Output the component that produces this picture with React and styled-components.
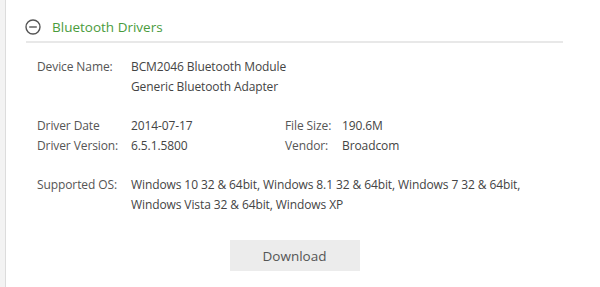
import React from 'react';
import styled, { createGlobalStyle } from 'styled-components';

const GlobalStyle = createGlobalStyle`
	html, body {
		margin: 0;
		padding: 0;
		background: #fff;
	}
	body {
		font-family: 'Open Sans', 'Noto Sans', sans-serif;
		color: #444;
	}
`;

const Page = styled.div`
	display: flex;
	height: 287px;
	width: 600px;
	overflow: hidden;
`;

const Rail = styled.div`
	width: 5px;
	flex: none;
	background: #f3f3f3;
	border-right: 1px solid #dcdcdc;
`;

const Main = styled.div`
	width: 537px;
	padding-left: 20px;
`;

const Header = styled.div`
	display: flex;
	align-items: center;
	gap: 11px;
	height: 43px;
	padding: 14px 0 2px 0;
	border-bottom: 2px solid #e8e8e8;
	box-sizing: border-box;
`;

const Title = styled.span`
	font-size: 13.5px;
	color: #4a9b3c;
	line-height: 20px;
`;

const Body = styled.div`
	padding: 14px 0 0 11px;
`;

const Grid = styled.div`
	display: grid;
	grid-template-columns: ${(p) => p.$cols};
	grid-auto-rows: 20px;
	margin-bottom: ${(p) => p.$gap ?? 19}px;
	font-size: 12px;
	letter-spacing: -0.1px;
	line-height: 20px;
`;

const Label = styled.div`
	color: #555;
	white-space: nowrap;
`;

const Value = styled.div`
	color: #444;
	white-space: nowrap;
`;

const Wrap = styled.div`
	color: #444;
	grid-row: span 2;
	white-space: nowrap;
`;

const ButtonRow = styled.div`
	display: flex;
	justify-content: center;
	padding-top: 25px;
`;

const Button = styled.button`
	width: 130px;
	height: 31px;
	border: none;
	background: #ececec;
	color: #555;
	font-family: 'Open Sans', 'Noto Sans', sans-serif;
	font-size: 13.5px;
	cursor: pointer;
`;

function CollapseIcon() {
	return (
		<svg width="16" height="16" viewBox="0 0 16 16" style={{ marginLeft: -1 }}>
			<circle cx="8" cy="8" r="7" fill="none" stroke="#555" strokeWidth="1.4" />
			<line x1="4.2" y1="8" x2="11.8" y2="8" stroke="#555" strokeWidth="1.4" />
		</svg>
	);
}

export default function App() {
	return (
		<Page>
			<GlobalStyle />
			<Rail />
			<Main>
				<Header>
					<CollapseIcon />
					<Title>Bluetooth Drivers</Title>
				</Header>
				<Body>
					<Grid $cols="94px auto">
						<Label>Device Name:</Label>
						<Value>BCM2046 Bluetooth Module</Value>
						<div />
						<Value>Generic Bluetooth Adapter</Value>
					</Grid>
					<Grid $cols="94px 154px 57px auto">
						<Label>Driver Date</Label>
						<Value>2014-07-17</Value>
						<Label>File Size:</Label>
						<Value>190.6M</Value>
						<Label>Driver Version:</Label>
						<Value>6.5.1.5800</Value>
						<Label>Vendor:</Label>
						<Value>Broadcom</Value>
					</Grid>
					<Grid $cols="94px auto" $gap={0}>
						<Label>Supported OS:</Label>
						<Wrap>
							Windows 10 32 &amp; 64bit, Windows 8.1 32 &amp; 64bit, Windows 7 32 &amp; 64bit,
							<br />
							Windows Vista 32 &amp; 64bit, Windows XP
						</Wrap>
					</Grid>
				</Body>
				<ButtonRow>
					<Button>Download</Button>
				</ButtonRow>
			</Main>
		</Page>
	);
}
